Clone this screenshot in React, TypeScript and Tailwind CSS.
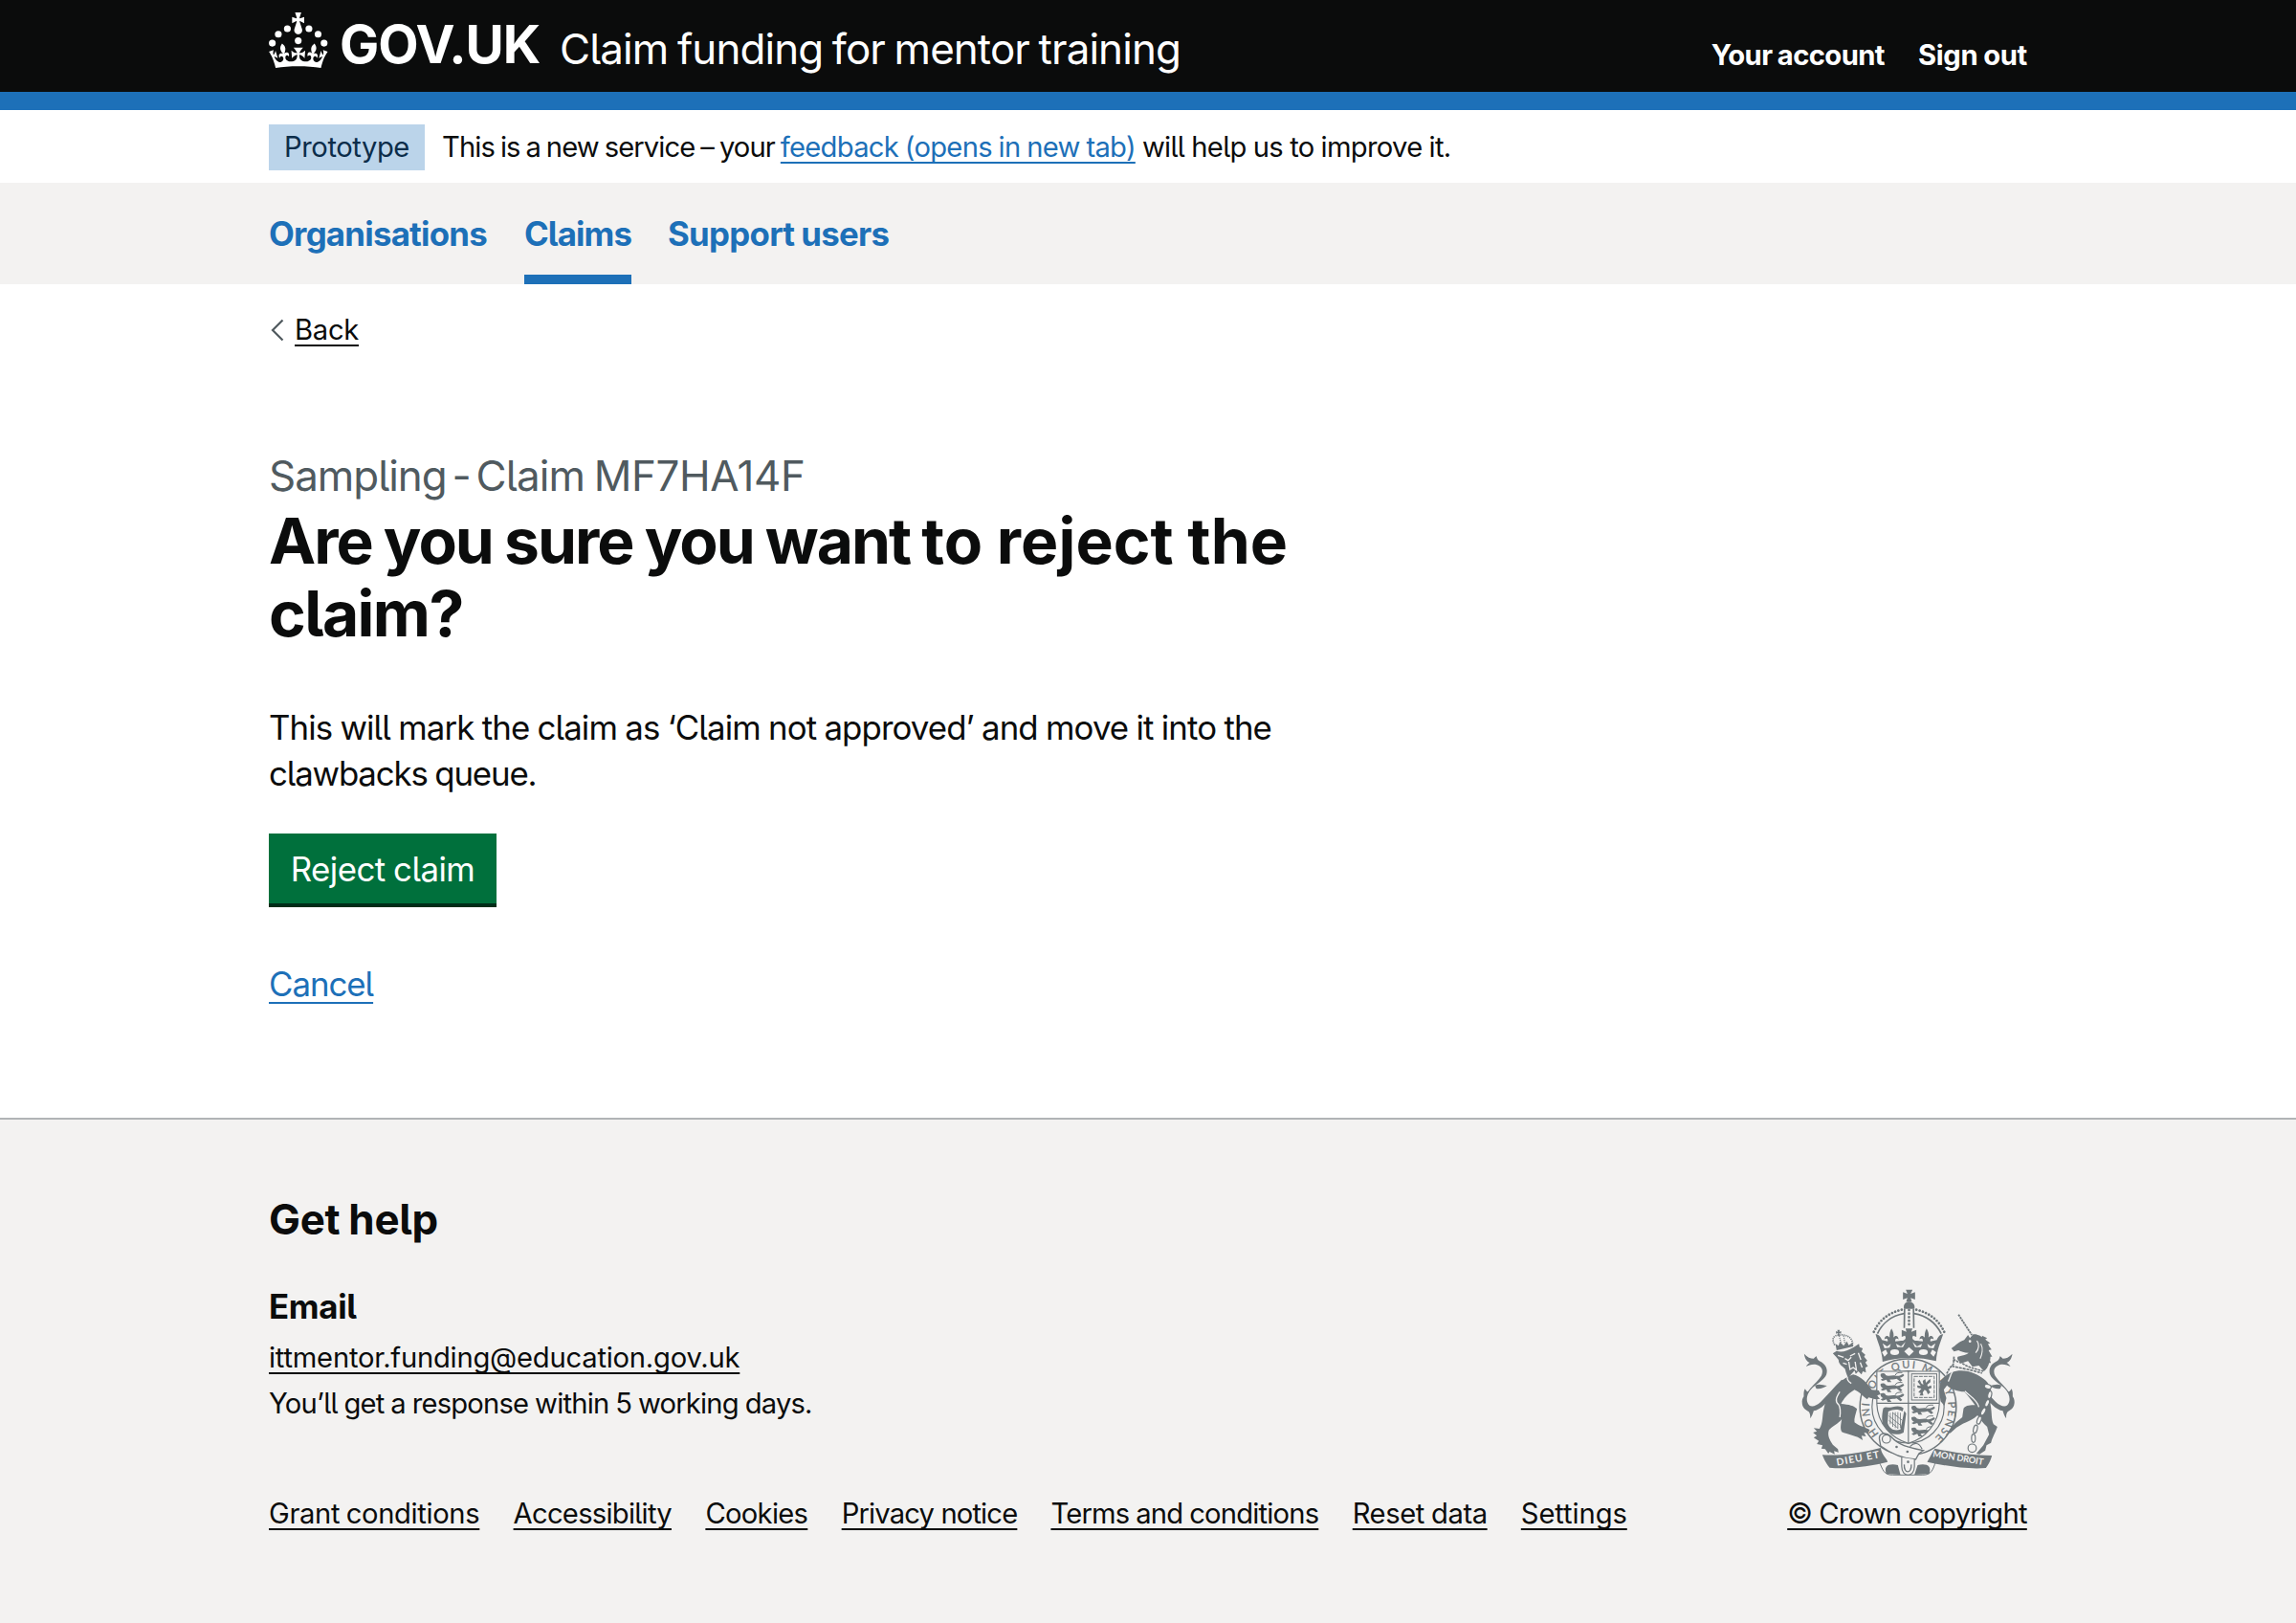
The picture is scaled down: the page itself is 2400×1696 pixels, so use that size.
import type { ReactNode } from 'react';

const INK = '#6f777b';
const PAPER = '#f3f2f1';

function Crown() {
  return (
    <svg viewBox="0 0 64 60" className="h-[58px] w-[62px] shrink-0" fill="currentColor" aria-hidden="true">
      <circle cx="20" cy="17.6" r="3.7" />
      <circle cx="10.2" cy="23.5" r="3.7" />
      <circle cx="3.7" cy="33.2" r="3.7" />
      <circle cx="31.7" cy="30.6" r="3.7" />
      <circle cx="43.3" cy="17.6" r="3.7" />
      <circle cx="53.2" cy="23.5" r="3.7" />
      <circle cx="59.7" cy="33.2" r="3.7" />
      <path d="M33.1,9.8c.2-.1.3-.3.5-.5l4.6,2.4v-6.8l-4.6,1.5c-.1-.2-.3-.3-.5-.5l1.9-5.9h-6.7l1.9,5.9c-.2.1-.3.3-.5.5l-4.6-1.5v6.8l4.6-2.4c.1.2.3.3.5.5l-2.6,8c-.9,2.8,1.2,5.7,4.1,5.7h0c3,0,5.1-2.9,4.1-5.7l-2.6-8ZM37,37.9s-3.4,3.8-4.1,6.1c2.2,0,4.2-.5,6.4-2.8l-.7,8.5c-2-2.8-4.4-4.1-5.7-3.8.1,3.1.5,6.7,5.8,7.2,3.7.3,6.7-1.5,7-3.8.4-2.6-2-4.3-3.7-1.6-1.4-4.5,2.4-6.1,4.9-3.2-1.9-4.5-1.8-7.7,2.4-10.9,3,4,2.6,7.3-1.2,11.1,2.4-1.3,6.2,0,4,4.6-1.2-2.8-3.7-2.2-4.2.2-.3,1.7.7,3.7,3,4.2,1.9.3,4.7-.9,7-5.9-1.3,0-2.4.7-3.9,1.7l2.4-8c.6,2.3,1.4,3.7,2.2,4.5.6-1.6.5-2.8,0-5.3l5,1.8c-2.6,3.6-5.2,8.7-7.3,17.5-7.4-1.1-15.7-1.7-24.5-1.7h0c-8.8,0-17.1.6-24.5,1.7-2.1-8.9-4.7-13.9-7.3-17.5l5-1.8c-.5,2.5-.6,3.7,0,5.3.8-.8,1.6-2.3,2.2-4.5l2.4,8c-1.5-1-2.6-1.7-3.9-1.7,2.3,5,5.2,6.2,7,5.9,2.3-.4,3.3-2.4,3-4.2-.5-2.4-3-3.1-4.2-.2-2.2-4.6,1.6-6,4-4.6-3.7-3.7-4.2-7.1-1.2-11.1,4.2,3.2,4.3,6.4,2.4,10.9,2.5-2.8,6.3-1.3,4.9,3.2-1.8-2.7-4.1-1-3.7,1.6.3,2.3,3.3,4.1,7,3.8,5.4-.5,5.7-4.2,5.8-7.2-1.3-.2-3.7,1-5.7,3.8l-.7-8.5c2.2,2.3,4.2,2.7,6.4,2.8-.7-2.3-4.1-6.1-4.1-6.1h10.6,0Z" />
    </svg>
  );
}

function Tail() {
  return (
    <g>
      <path d="M78 253 C88 264 98 268 108 268 C112 264 115 262 117 261 C118 267 120 272 126 276 C144 284 154 300 148 318 C142 334 120 346 104 360 C90 374 84 390 88 404 C94 424 112 420 130 404 L196 334 L206 342 L142 412 C130 424 118 430 108 432 C106 440 102 450 97 456 C98 448 97 440 92 434 C84 430 74 424 72 410 C70 398 74 392 77 387 C77 378 76 370 81 363 C84 369 87 372 90 372 C98 358 122 338 132 322 C140 306 134 292 116 287 C104 284 92 290 84 293 C88 287 92 283 96 281 C86 276 80 268 78 253Z" fill={INK} />
      <path d="M112 352 C124 346 136 350 150 353 C140 360 128 364 116 362Z" fill={INK} />
    </g>
  );
}

function PassantLion({ x, y }: { x: number; y: number }) {
  return (
    <g transform={`translate(${x} ${y})`} fill={INK}>
      <path d="M2 2 C8 -1 16 0 18 6 C26 12 40 4 50 8 C58 10 66 6 72 2 L76 6 C72 12 66 13 62 14 L70 22 L64 26 L52 17 C44 20 36 18 30 20 L36 28 L24 28 L20 20 L8 24 L2 20 L10 16 C4 14 0 8 2 2Z" />
      <path d="M48 6 C50 -2 60 -3 70 -2" fill="none" stroke={INK} strokeWidth="3" />
    </g>
  );
}

function RoyalArms() {
  return (
    <svg viewBox="70 50 668 588" className="ml-[2px] h-[196px] w-[223px]" aria-hidden="true">
      <defs>
        <path id="garter" d="M313 504 A124 124 0 1 1 456 536" />
        <path id="motto-left" d="M181 604 Q250 592 318 578" />
        <path id="motto-right" d="M481 576 Q560 588 644 603" />
        <clipPath id="shield">
          <path d="M306 308 H502 V410 C500 470 460 518 405 534 C350 518 308 470 306 410Z" />
        </clipPath>
      </defs>

      <Tail />
      <g transform="translate(809 0) scale(-1 1)">
        <Tail />
      </g>

      {/* garter */}
      <circle cx="404" cy="420" r="151" fill={PAPER} stroke={INK} strokeWidth="4.5" />
      <circle cx="404" cy="420" r="113" fill={PAPER} stroke={INK} strokeWidth="3.5" />
      <text fill={INK} stroke={INK} strokeWidth="0.8" fontFamily="Lato, sans-serif" fontSize="33" fontWeight="400">
        <textPath href="#garter" textLength="584">HONI SOIT QUI MAL Y PENSE</textPath>
      </text>

      {/* shield */}
      <path d="M306 308 H502 V410 C500 470 460 518 405 534 C350 518 308 470 306 410Z" fill={PAPER} stroke={INK} strokeWidth="3.5" />
      <g clipPath="url(#shield)">
        <path d="M405 308 V534 M306 408 H502" stroke={INK} strokeWidth="3.5" />
        <PassantLion x={316} y={314} />
        <PassantLion x={316} y={345} />
        <PassantLion x={316} y={376} />
        <rect x="415" y="316" width="79" height="82" fill="none" stroke={INK} strokeWidth="3" />
        <rect x="423" y="324" width="63" height="66" fill="none" stroke={INK} strokeWidth="3" strokeDasharray="12 3" />
        <path d="M434 340 L440 334 L446 346 L452 350 L450 338 L458 332 L460 344 L468 336 L474 332 L474 342 L464 350 L466 356 L476 352 L478 360 L468 364 L474 374 L466 380 L462 370 L456 366 L450 374 L452 384 L440 384 L444 376 L436 374 L446 362 L434 360 L432 352 L444 354Z" fill={INK} />
        <path d="M326 424 C332 416 346 424 356 420 C368 416 382 416 390 424 L386 434 C372 424 356 428 342 434 L340 470 C346 490 362 496 380 490 L392 432 L398 440 L390 500 C372 510 346 506 334 492 C318 470 322 444 326 424Z" fill={INK} />
        <path d="M348 438 V474 M356 436 V482 M364 436 V486 M372 436 V488 M380 438 V486 M344 448 L384 480 M344 462 L372 486 M356 438 L386 462" stroke={INK} strokeWidth="2.4" />
        <PassantLion x={413} y={416} />
        <PassantLion x={413} y={450} />
        <PassantLion x={413} y={484} />
      </g>

      {/* large crown */}
      <g fill={INK}>
        <path d="M397 52 H418 L412 65 L426 60 V83 L412 78 L416 90 H398 L402 78 L388 83 V60 L402 65Z" />
        <path d="M391 112 C388 96 398 90 407 90 C416 90 427 96 424 112Z" />
        <path d="M302 192 C312 192 318 200 322 210 L340 214 C342 204 334 204 330 208 C330 196 340 194 346 202 C346 192 346 184 352 174 C358 184 360 192 358 202 C364 194 374 196 374 208 C370 204 362 204 364 214 L382 212 C394 212 400 204 394 196 L384 200 V178 L399 184 L396 174 H418 L414 184 L430 178 V200 L420 196 C414 204 420 212 432 212 L450 214 C452 204 444 204 440 208 C440 196 450 194 456 202 C456 192 456 184 462 174 C468 184 470 192 468 202 C474 194 484 196 484 208 C480 204 472 204 474 214 L494 210 C498 200 504 192 514 192 C506 216 494 242 492 276 C440 262 376 262 324 278 C322 242 308 216 302 192Z" />
      </g>
      <path d="M384 115 C344 124 312 148 296 186 M430 115 C470 124 502 148 518 186" fill="none" stroke={INK} strokeWidth="8" strokeDasharray="0.1 10.4" strokeLinecap="round" />
      <path d="M391 127 C352 134 322 158 308 190 M423 127 C462 134 492 158 508 190" fill="none" stroke={INK} strokeWidth="5" />
      <path d="M393 112 L392 172 M421 112 L422 172" stroke={INK} strokeWidth="5" />
      <path d="M407 116 V166" stroke={INK} strokeWidth="8" strokeDasharray="0.1 11" strokeLinecap="round" />
      <g fill={PAPER}>
        <path d="M392 246 L407 232 L422 246 L407 260Z" />
        <ellipse cx="362" cy="248" rx="14" ry="9" />
        <ellipse cx="452" cy="248" rx="14" ry="9" />
        <path d="M322 248 L334 240 L340 252 L330 262Z M492 248 L480 240 L474 252 L484 262Z" />
        <path d="M324 220 L338 230 L350 222 L346 234 L330 236Z M490 220 L476 230 L464 222 L468 234 L484 236Z M366 222 L382 230 L396 216 L388 232 H370Z M448 222 L432 230 L418 216 L426 232 H444Z" />
      </g>

      {/* lion */}
      <g fill={INK}>
        <path d="M182 178 H190 L188 184 L194 182 V190 L188 188 L189 196 H183 L184 188 L178 190 V182 L184 184Z" />
        <path d="M174 226 C162 206 172 194 186 195 C206 190 232 200 230 226" fill="none" stroke={INK} strokeWidth="5" strokeDasharray="3.5 3" />
        <path d="M188 196 L194 222 M202 196 L206 222" stroke={INK} strokeWidth="3.5" strokeDasharray="3.5 3" />
        <path d="M176 222 L186 228 L190 216 L202 228 L212 214 L218 226 L230 218 L232 230 L180 242Z" />
        <path d="M168 252 L180 244 C196 250 212 244 234 232 L250 222 L252 232 L262 236 L258 246 L270 256 L266 262 L276 274 L270 280 L278 292 L270 296 L272 312 L262 308 L258 318 L248 308 L240 316 L236 306 L216 328 C210 316 208 306 206 300 C196 290 186 286 186 272 L178 262Z" />
        <path d="M232 318 C258 324 276 346 290 366 L312 368 L318 380 L306 384 L316 394 L302 396 L280 390 L276 396 L266 388 C254 376 246 370 236 366 C218 376 200 396 194 410 C218 412 236 416 244 426 C240 442 234 456 236 468 C250 480 268 482 284 492 L278 502 L266 500 L272 512 L258 510 L262 524 L246 514 L232 510 C216 504 204 502 196 498 C190 486 194 472 196 458 C186 472 168 478 156 492 C150 508 158 524 168 538 L184 552 L186 562 L172 558 L174 568 L158 560 L154 566 L144 552 L132 550 L136 540 L118 536 L124 526 L108 516 L118 510 L106 500 L118 496 L108 486 L126 488 C138 470 134 448 140 424 C146 396 158 376 172 360 C188 342 206 328 232 318Z" />
      </g>
      <path d="M218 278 L222 302 L232 296 L242 304 L238 278 M184 258 L202 264 M222 260 L238 252 M206 268 L216 274 L226 264 M248 250 L256 272 M254 280 L260 296 M200 282 L212 286" fill="none" stroke={PAPER} strokeWidth="4" />
      <path d="M190 372 C178 390 174 402 186 412 C194 424 192 438 190 452 M214 326 C212 334 216 340 226 346" fill="none" stroke={PAPER} strokeWidth="4" />

      {/* unicorn */}
      <path d="M562 130 L604 194" stroke={INK} strokeWidth="5.5" strokeDasharray="7 2" />
      <g fill={INK}>
        <path d="M540 236 C552 228 566 214 580 210 L592 194 L598 204 L608 192 C620 190 636 198 644 208 C656 214 660 232 656 244 C664 254 664 270 658 282 C656 292 650 302 642 308 L626 290 L606 294 L592 276 L574 282 C560 276 556 268 560 262 C576 258 588 256 594 250 C580 250 570 246 562 242 L548 246Z" />
        <path d="M636 196 L652 204 L646 208 L662 220 L652 222 L666 240 L656 242 L668 262 L656 262 L664 282 L650 282 L652 300 L640 290Z" />
        <path d="M506 338 C526 312 556 300 592 308 C620 316 640 328 652 342 C668 362 670 390 662 410 C668 440 664 456 672 474 L684 482 C676 504 668 516 664 532 L650 540 L646 556 L628 568 L618 566 L640 540 L658 506 L652 482 C640 472 630 458 622 446 C610 458 592 466 576 472 L556 484 L536 502 L530 496 L552 470 L574 452 L578 424 C586 414 600 414 614 414 C602 398 590 382 580 372 C560 370 540 366 526 352 L516 366 L524 392 L518 416 L506 402 L502 372Z" />
      </g>
      <circle cx="598" cy="214" r="4" fill={PAPER} />
      <path d="M620 212 C628 224 626 238 616 250 M632 222 C640 236 636 256 630 268" fill="none" stroke={PAPER} strokeWidth="3.5" />
      <path d="M548 262 L546 286 L534 298 L524 318 M546 270 L560 278 L572 282 L586 290 L600 296 L640 308" fill="none" stroke={INK} strokeWidth="5" strokeDasharray="8 2.5" />
      <path d="M542 292 C570 298 606 304 636 314" fill="none" stroke={INK} strokeWidth="5" strokeDasharray="9 2.5" />
      <path d="M582 370 C600 388 622 398 626 420 M544 308 C536 320 536 328 530 340" fill="none" stroke={PAPER} strokeWidth="4" />
      <g fill={PAPER} stroke={INK} strokeWidth="3.5">
        <ellipse cx="654" cy="356" rx="11" ry="7" transform="rotate(20 654 356)" />
        <ellipse cx="660" cy="382" rx="6" ry="12" transform="rotate(12 660 382)" />
        <ellipse cx="652" cy="408" rx="6" ry="12" transform="rotate(22 652 408)" />
        <ellipse cx="640" cy="434" rx="6" ry="13" transform="rotate(28 640 434)" />
        <ellipse cx="627" cy="461" rx="6" ry="13" transform="rotate(20 627 461)" />
        <ellipse cx="615" cy="489" rx="6" ry="13" transform="rotate(14 615 489)" />
        <ellipse cx="609" cy="518" rx="6" ry="13" />
        <circle cx="605" cy="549" r="13" />
      </g>

      {/* motto scroll */}
      <path d="M135 570 C200 574 262 562 318 548 C322 572 336 578 340 592 C290 604 220 616 158 610 C148 598 140 584 135 570Z" fill={INK} />
      <path d="M667 572 C606 572 546 562 488 550 C480 560 474 576 464 592 C520 604 590 616 648 611 C658 598 664 584 667 572Z" fill={INK} />
      <path d="M314 594 C324 612 326 634 356 633 H448 C480 634 482 612 490 594" fill="none" stroke={INK} strokeWidth="3" />
      <path d="M336 630 C326 604 344 596 372 602 L380 632Z M470 630 C480 604 462 596 434 602 L424 632Z" fill={INK} />
      <text fill={PAPER} fontFamily="Lato, sans-serif" fontSize="31" fontWeight="700">
        <textPath href="#motto-left" textLength="136">DIEU ET</textPath>
      </text>
      <text fill={PAPER} fontFamily="Lato, sans-serif" fontSize="28" fontWeight="700">
        <textPath href="#motto-right" textLength="160">MON DROIT</textPath>
      </text>

      {/* buckle and strap */}
      <path d="M314 520 C312 500 334 498 350 512 C374 540 404 546 452 556 L438 566 L428 584 C386 582 350 566 318 542Z" fill={PAPER} stroke={INK} strokeWidth="4" />
      <circle cx="336" cy="520" r="13" fill="none" stroke={INK} strokeWidth="3.5" />
      <circle cx="368" cy="545" r="4" fill={INK} />
      <circle cx="402" cy="560" r="4" fill={INK} />
      <path d="M410 544 C424 530 438 530 448 552" fill="none" stroke={INK} strokeWidth="3.5" />
      <path d="M384 578 V606 C384 642 424 642 424 606 V584" fill={PAPER} stroke={INK} strokeWidth="3.5" />
      <path d="M392 600 C390 630 416 630 414 600" fill="none" stroke={INK} strokeWidth="4" />
      <circle cx="404" cy="592" r="4" fill={INK} />
    </svg>
  );
}

function Container({ className = '', children }: { className?: string; children: ReactNode }) {
  return <div className={`mx-auto w-[1838px] ${className}`}>{children}</div>;
}

const LINK = 'underline decoration-2 underline-offset-[5px] [text-decoration-skip-ink:none]';

const footerLinks = [
  { label: 'Grant conditions', fit: 'w-[220.5px] tracking-[-0.35px] [word-spacing:-1.4px]' },
  { label: 'Accessibility', fit: 'w-[165.7px] tracking-[-0.74px]' },
  { label: 'Cookies', fit: 'w-[107.2px] tracking-[-0.7px]' },
  { label: 'Privacy notice', fit: 'w-[183.7px] tracking-[-0.85px]' },
  { label: 'Terms and conditions', fit: 'w-[280.2px] tracking-[-0.8px] [word-spacing:-0.6px]' },
  { label: 'Reset data', fit: 'w-[141px] tracking-[-0.45px] [word-spacing:-0.5px]' },
  { label: 'Settings', fit: 'w-[111px] tracking-[-0.1px]' },
];

export default function App() {
  return (
    <div className="flex min-h-[1696px] w-[2400px] flex-col bg-white font-['Inter',sans-serif] text-[#0b0c0c] [font-feature-settings:'cv05']">
      <header className="h-[115px] border-b-[19px] border-[#1d70b8] bg-[#0b0c0c] text-white">
        <Container className="flex h-[96px] items-start whitespace-nowrap">
          <div className="mt-[13px] flex">
            <Crown />
          </div>
          <span className="mt-[16px] ml-[12px] w-[216px] text-[55px] leading-[60px] font-bold tracking-[-1px]">GOV.UK</span>
          <span className="mt-[26.5px] ml-[14px] text-[43.9px] leading-[48px] tracking-[-0.9px] [word-spacing:-1.8px]">
            Claim funding for mentor training
          </span>
          <nav className="mt-[38px] ml-auto flex gap-[35px] text-[29.2px] leading-[40px] font-bold">
            <a className="tracking-[-0.6px] [word-spacing:-0.9px]">Your account</a>
            <a className="tracking-[-0.3px] [word-spacing:-0.8px]">Sign out</a>
          </nav>
        </Container>
      </header>

      <Container className="flex h-[76px] items-center pt-[2px] text-[29.2px] leading-[40px] whitespace-pre">
        <strong className="flex h-[48px] w-[163px] items-center justify-center bg-[#bbd4ea] font-normal tracking-[-0.44px] text-[#0c2d4a]">
          Prototype
        </strong>
        <p className="ml-[18px]">
          <span className="tracking-[-0.9px] [word-spacing:-1.4px]">This is a new service – your </span>
          <a className={`${LINK} tracking-[-0.73px] text-[#1d70b8] [word-spacing:-0.7px]`}>feedback (opens in new tab)</a>
          <span className="tracking-[-0.7px] [word-spacing:-0.4px]"> will help us to improve it.</span>
        </p>
      </Container>

      <nav className="h-[106px] bg-[#f3f2f1]">
        <Container className="flex h-full gap-[39px] text-[34.8px] leading-[106px] font-bold whitespace-nowrap text-[#1d70b8]">
          <a className="w-[228px] tracking-[-0.75px]">Organisations</a>
          <a className="w-[112px] border-b-[10px] border-[#1d70b8] tracking-[-0.9px]">Claims</a>
          <a className="-ml-px tracking-[-0.7px] [word-spacing:-0.6px]">Support users</a>
        </Container>
      </nav>

      <Container className="mt-[30px] flex items-center text-[29.2px] leading-[36px]">
        <svg viewBox="0 0 14 24" className="ml-[2px] h-[24px] w-[14px]" fill="none" stroke="#505a5f" strokeWidth="2.2">
          <path d="M12.5 1.5 L2 12 L12.5 22.5" />
        </svg>
        <a className={`${LINK} ml-[11px] tracking-[-0.3px]`}>Back</a>
      </Container>

      <main>
        <Container className="pt-[105px] whitespace-nowrap">
          <p className="mb-px text-[43.9px] leading-[58px] text-[#505a5f]">
            <span className="tracking-[-1px] [word-spacing:-5.6px]">Sampling - </span>
            <span className="tracking-[-0.8px] [word-spacing:-2px]">Claim </span>
            <span className="tracking-[-0.4px]">MF7HA14F</span>
          </p>
          <h1 className="text-[65.9px] leading-[76px] font-bold">
            <span className="block">
              <span className="tracking-[-1.95px] [word-spacing:-1.6px]">Are you sure you want </span>
              <span className="tracking-[0.1px] [word-spacing:-1.3px]">to reject the</span>
            </span>
            <span className="block tracking-[-1.6px]">claim?</span>
          </h1>
          <p className="mt-[57px] text-[34.8px] leading-[48px]">
            <span className="block tracking-[-0.9px] [word-spacing:-0.6px]">This will mark the claim as ‘Claim not approved’ and move it into the</span>
            <span className="block tracking-[-1.15px] [word-spacing:-1px]">clawbacks queue.</span>
          </p>
          <button className="mt-[39px] flex h-[73px] w-[238px] items-center justify-center bg-[#00703c] text-[34.8px] leading-[48px] tracking-[-0.55px] text-white shadow-[0_4px_0_#002d18] [word-spacing:-0.8px]">
            Reject claim
          </button>
          <p className="mt-[60px] text-[34.8px] leading-[48px]">
            <a className="tracking-[-1.03px] text-[#1d70b8] underline decoration-2 underline-offset-[6px]">Cancel</a>
          </p>
        </Container>
      </main>

      <footer className="mt-[116px] flex-1 border-t-2 border-[#b1b4b6] bg-[#f3f2f1]">
        <Container className="flex items-end justify-between pt-[80px] whitespace-nowrap">
          <div>
            <h2 className="text-[43.9px] leading-[48px] font-bold tracking-[-0.3px] [word-spacing:-1px]">Get help</h2>
            <h3 className="mt-[43px] text-[34.8px] leading-[48px] font-bold tracking-[-0.3px]">Email</h3>
            <div className="mt-[6px] text-[29.2px] leading-[48px]">
              <p>
                <a className={`${LINK} tracking-[-0.23px]`}>ittmentor.funding@education.gov.uk</a>
              </p>
              <p className="tracking-[-0.8px] [word-spacing:-0.6px]">You’ll get a response within 5 working days.</p>
            </div>
            <ul className="mt-[71px] flex gap-[35.1px] text-[29.2px] leading-[40px]">
              {footerLinks.map((l) => (
                <li key={l.label} className={l.fit}>
                  <a className={LINK}>{l.label}</a>
                </li>
              ))}
            </ul>
          </div>
          <div className="flex w-[251px] flex-col items-center">
            <RoyalArms />
            <a className={`${LINK} mt-[19px] text-[29.2px] leading-[40px] tracking-[-0.75px] [word-spacing:-0.4px]`}>© Crown copyright</a>
          </div>
        </Container>
      </footer>
    </div>
  );
}
